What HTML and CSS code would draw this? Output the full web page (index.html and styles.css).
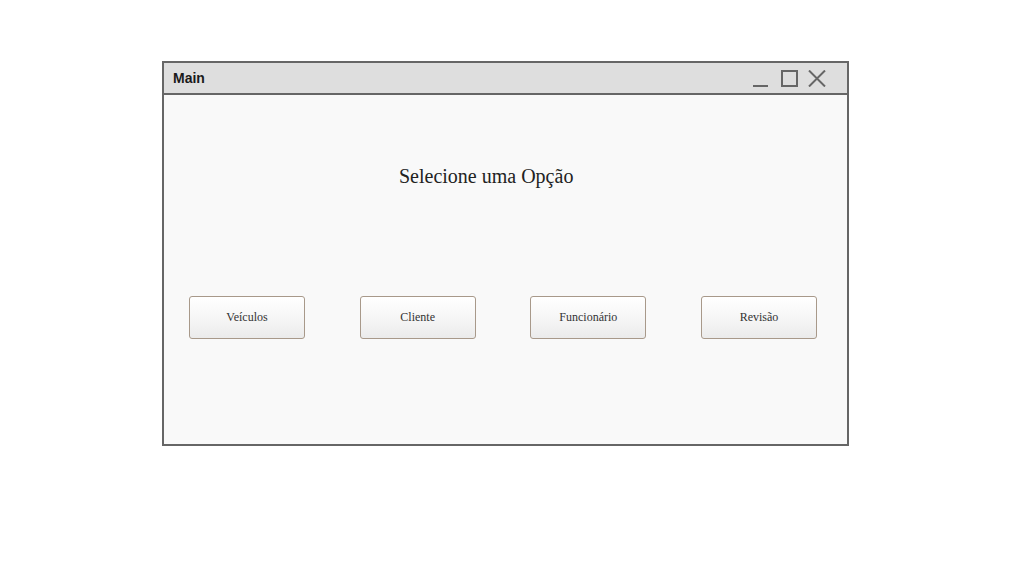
FILE: index.html
```html
<!DOCTYPE html>
<html>
<head>
<meta charset="utf-8">
<link rel="stylesheet" href="styles.css">
</head>
<body>
<div class="window">
  <div class="titlebar">
    <span class="title">Main</span>
    <div class="controls">
      <svg width="16" height="16" viewBox="0 0 16 16" class="ctl min"><line x1="0" y1="15" x2="15" y2="15" stroke="#666" stroke-width="2"/></svg>
      <svg width="17" height="17" viewBox="0 0 17 17" class="ctl"><rect x="1" y="1" width="15" height="15" fill="none" stroke="#666" stroke-width="2"/></svg>
      <svg width="18" height="17" viewBox="0 0 18 17" class="ctl"><path d="M1 0.5 L17 16.5 M17 0.5 L1 16.5" stroke="#666" stroke-width="2" fill="none"/></svg>
    </div>
  </div>
  <div class="content">
    <h1 class="heading">Selecione uma Opção</h1>
    <div class="buttons">
      <button class="btn">Veículos</button>
      <button class="btn">Cliente</button>
      <button class="btn">Funcionário</button>
      <button class="btn">Revisão</button>
    </div>
  </div>
</div>
</body>
</html>
```
FILE: styles.css
```css
html, body {
  margin: 0;
  padding: 0;
  background: #ffffff;
}
body {
  padding: 61px 0 0 162px;
}
.window {
  width: 683px;
  height: 381px;
  border: 2px solid #666666;
  background: #f9f9f9;
  display: flex;
  flex-direction: column;
}
.titlebar {
  height: 30px;
  background: #dedede;
  border-bottom: 2px solid #666666;
  display: flex;
  align-items: center;
  justify-content: space-between;
  padding: 0 21px 0 9px;
}
.title {
  font-family: "Liberation Sans", Arial, sans-serif;
  font-weight: bold;
  font-size: 14px;
  color: #1a1a1a;
}
.controls {
  display: flex;
  align-items: center;
  gap: 10px;
  padding-top: 1px;
}
.ctl {
  display: block;
}
.min {
  margin-right: 2px;
}
.content {
  flex: 1;
  display: flex;
  flex-direction: column;
}
.heading {
  margin: 70px 0 0 235px;
  font-family: "Liberation Serif", "Times New Roman", serif;
  font-weight: normal;
  font-size: 20px;
  line-height: 23px;
  color: #222222;
}
.buttons {
  margin-top: 108px;
  display: flex;
  justify-content: space-between;
  padding: 0 30px 0 25px;
}
.btn {
  width: 116px;
  height: 43px;
  border: 1px solid #a8998a;
  border-radius: 3px;
  background: linear-gradient(to bottom, #ffffff 0%, #f6f6f6 50%, #ebebeb 100%);
  font-family: "Liberation Serif", "Times New Roman", serif;
  font-size: 12px;
  color: #333333;
  padding: 0;
  cursor: pointer;
}
```
